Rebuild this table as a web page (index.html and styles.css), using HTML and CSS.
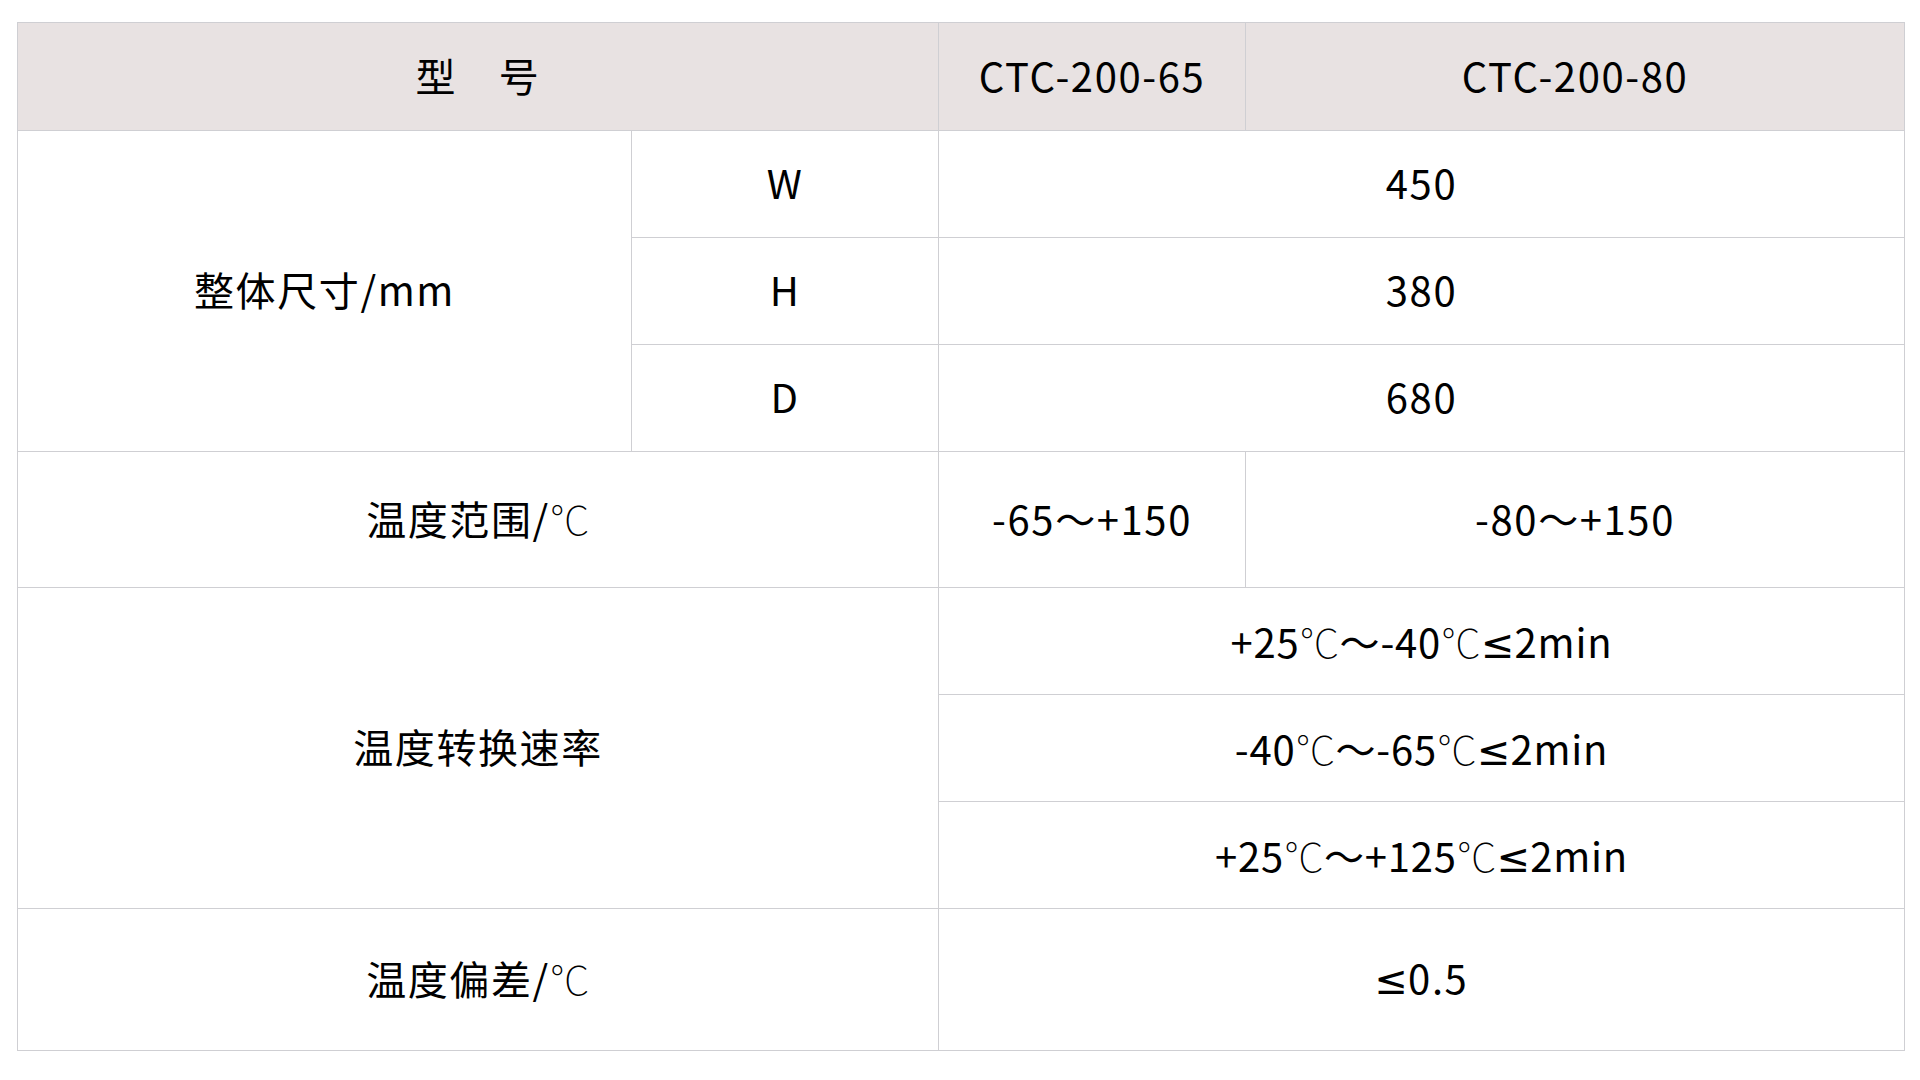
FILE: index.html
```html
<!DOCTYPE html>
<html lang="zh-CN">
<head>
<meta charset="utf-8">
<title>CTC-200 参数</title>
<link rel="stylesheet" href="styles.css">
</head>
<body>
<table class="spec">
  <colgroup>
    <col class="c1"><col class="c2"><col class="c3"><col class="c4">
  </colgroup>
  <tr class="head">
    <th colspan="2">型　号</th>
    <th>CTC-200-65</th>
    <th>CTC-200-80</th>
  </tr>
  <tr class="r107">
    <td rowspan="3">整体尺寸/mm</td>
    <td>W</td>
    <td colspan="2">450</td>
  </tr>
  <tr class="r107">
    <td>H</td>
    <td colspan="2">380</td>
  </tr>
  <tr class="r107">
    <td>D</td>
    <td colspan="2">680</td>
  </tr>
  <tr class="r136">
    <td colspan="2">温度范围/<span class="deg">℃</span></td>
    <td>-65～+150</td>
    <td>-80～+150</td>
  </tr>
  <tr class="r107">
    <td colspan="2" rowspan="3">温度转换速率</td>
    <td colspan="2" class="rate">+25<span class="deg">℃</span>～-40<span class="deg">℃</span><span class="le">≤</span>2min</td>
  </tr>
  <tr class="r107">
    <td colspan="2" class="rate">-40<span class="deg">℃</span>～-65<span class="deg">℃</span><span class="le">≤</span>2min</td>
  </tr>
  <tr class="r107">
    <td colspan="2" class="rate">+25<span class="deg">℃</span>～+125<span class="deg">℃</span><span class="le">≤</span>2min</td>
  </tr>
  <tr class="r142">
    <td colspan="2">温度偏差/<span class="deg">℃</span></td>
    <td colspan="2"><span class="le">≤</span>0.5</td>
  </tr>
</table>
</body>
</html>
```
FILE: styles.css
```css
html, body {
  margin: 0;
  padding: 0;
  background: #ffffff;
}
body {
  padding: 22px 0 0 17px;
  font-family: "Noto Sans CJK SC", "Noto Sans", sans-serif;
  color: #000;
}
.spec {
  border-collapse: collapse;
  table-layout: fixed;
  width: 1887px;
  font-size: 40px;
  font-weight: 400;
  letter-spacing: 1.6px;
}
.c1 { width: 614px; }
.c2 { width: 307px; }
.c3 { width: 307px; }
.c4 { width: 659px; }
.spec th,
.spec td {
  border: 1px solid #cfcfd3;
  padding: 0 0 4px 0;
  text-align: center;
  vertical-align: middle;
  font-weight: 400;
  line-height: 1.2;
}
.spec td.rate {
  letter-spacing: 0.8px;
  padding: 2px 0 0 0;
}
.head th {
  background: #e8e2e2;
}
.head { height: 108px; }
.r107 { height: 107px; }
.r136 { height: 136px; }
.r142 { height: 142px; }
.deg {
  font-weight: 100;
  letter-spacing: 0;
}
.le {
  font-family: "Noto Sans", "DejaVu Sans", sans-serif;
  letter-spacing: 0;
}
```
